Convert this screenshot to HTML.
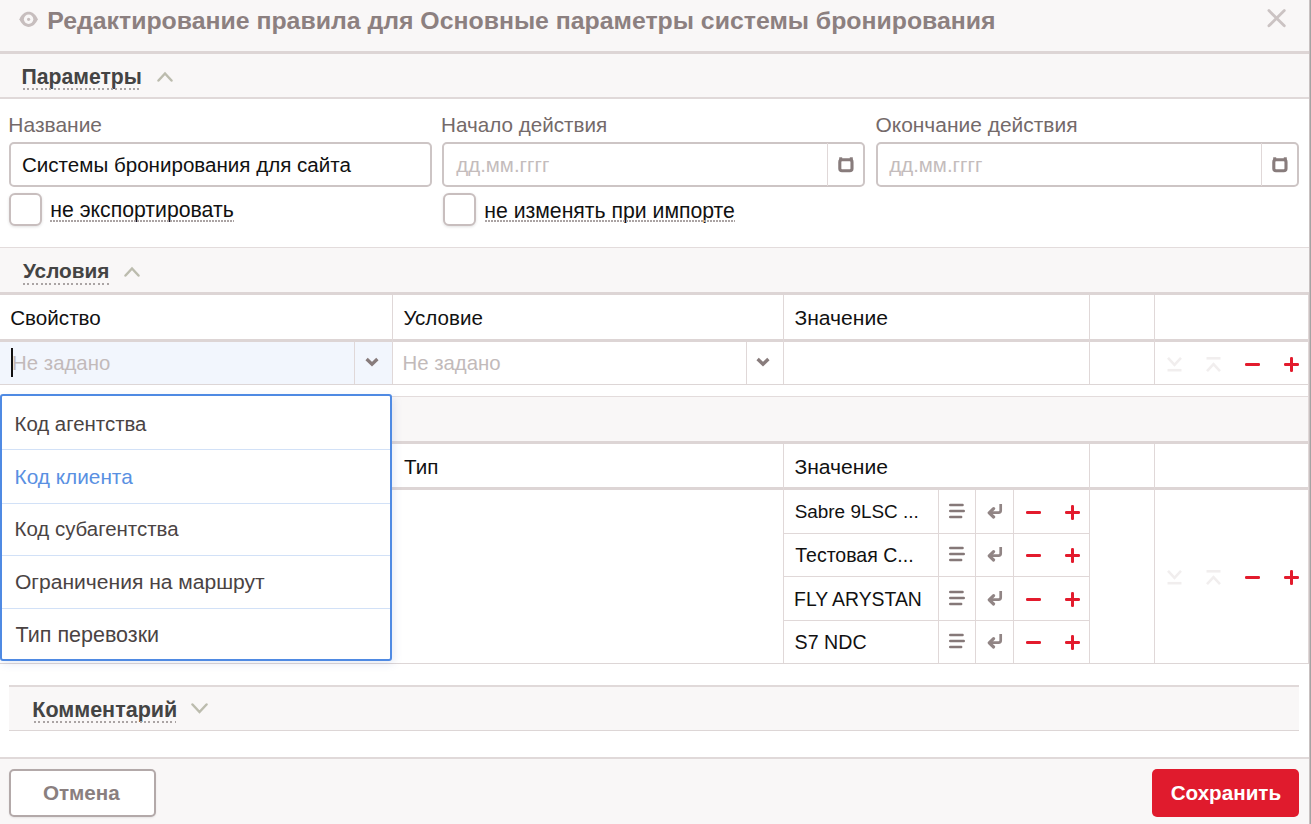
<!DOCTYPE html>
<html><head><meta charset="utf-8">
<style>
html,body{margin:0;padding:0;}
body{width:1311px;height:824px;position:relative;overflow:hidden;background:#fff;font-family:"Liberation Sans",sans-serif;}
.a{position:absolute;box-sizing:border-box;}
.t{position:absolute;white-space:nowrap;line-height:1;}
svg{position:absolute;}
</style></head><body>
<div class="a" style="left:0px;top:0px;width:1311px;height:51px;background:#f9f7f7;"></div>
<div class="a" style="left:0px;top:51px;width:1311px;height:3px;background:#ddd5d5;"></div>
<svg style="left:19px;top:11px" width="20" height="17" viewBox="0 0 20 17"><path d="M0.4 8.3 C4.4 -1.8, 14.8 -1.8, 18.8 8.3 C14.8 18.4, 4.4 18.4, 0.4 8.3 Z" fill="#c7bebe"/><circle cx="9.6" cy="8.3" r="4.7" fill="#f9f7f7"/><circle cx="9.6" cy="8.3" r="1.6" fill="#c7bebe"/></svg>
<div class="t" style="left:47.26px;top:8.68px;font-size:24.83px;color:#8c8080;font-weight:bold;">Редактирование правила для Основные параметры системы бронирования</div>
<svg style="left:1267px;top:9px" width="20" height="20" viewBox="0 0 20 20"><path d="M1.9 1.6 L17.3 16.8 M17.3 1.6 L1.9 16.8" stroke="#cbc3c3" stroke-width="2.8" stroke-linecap="round"/></svg>
<div class="a" style="left:0px;top:54px;width:1309px;height:43px;background:#f9f7f7;"></div>
<div class="a" style="left:0px;top:97px;width:1309px;height:2px;background:#e0d9d9;"></div>
<div class="t" style="left:21.52px;top:66.05px;font-size:21.21px;color:#444;font-weight:bold;">Параметры</div>
<div class="a" style="left:23px;top:88px;width:119px;height:2px;background:repeating-linear-gradient(90deg,#aaa4a4 0 2px,transparent 2px 4.4px);"></div>
<svg style="left:157px;top:71px" width="16" height="11" viewBox="0 0 16 11"><path d="M1.5 9.5 L8 2.5 L14.5 9.5" fill="none" stroke="#bcbcae" stroke-width="2.5" stroke-linecap="round"/></svg>
<div class="t" style="left:8.32px;top:114.50px;font-size:20.97px;color:#746a6a;">Название</div>
<div class="t" style="left:441.10px;top:114.79px;font-size:20.63px;color:#746a6a;">Начало действия</div>
<div class="t" style="left:875.45px;top:114.51px;font-size:20.96px;color:#746a6a;">Окончание действия</div>
<div class="a" style="left:9px;top:142px;width:423px;height:45px;border:2px solid #cdc5c5;border-radius:5px;"></div>
<div class="t" style="left:21.97px;top:154.58px;font-size:20.58px;color:#111;">Системы бронирования для сайта</div>
<div class="a" style="left:442px;top:142px;width:423px;height:45px;border:2px solid #cdc5c5;border-radius:5px;"></div>
<div class="a" style="left:827px;top:143px;width:1px;height:43px;background:#e0d8d8;"></div>
<div class="t" style="left:456.35px;top:154.72px;font-size:20.41px;color:#c4bcbc;">дд.мм.гггг</div>
<svg style="left:838px;top:157px" width="16" height="16" viewBox="0 0 16 16"><rect x="1.8" y="2.8" width="12.2" height="11.0" rx="2.2" fill="none" stroke="#887c7c" stroke-width="3.1"/><rect x="1.2" y="0.3" width="3" height="3" fill="#887c7c"/><rect x="11.8" y="0.3" width="3" height="3" fill="#887c7c"/></svg>
<div class="a" style="left:876px;top:142px;width:423px;height:45px;border:2px solid #cdc5c5;border-radius:5px;"></div>
<div class="a" style="left:1261px;top:143px;width:1px;height:43px;background:#e0d8d8;"></div>
<div class="t" style="left:889.35px;top:154.72px;font-size:20.41px;color:#c4bcbc;">дд.мм.гггг</div>
<svg style="left:1272px;top:157px" width="16" height="16" viewBox="0 0 16 16"><rect x="1.8" y="2.8" width="12.2" height="11.0" rx="2.2" fill="none" stroke="#887c7c" stroke-width="3.1"/><rect x="1.2" y="0.3" width="3" height="3" fill="#887c7c"/><rect x="11.8" y="0.3" width="3" height="3" fill="#887c7c"/></svg>
<div class="a" style="left:9px;top:193px;width:33px;height:33px;border:2px solid #c8bebe;border-radius:6px;box-shadow:0 1px 3px rgba(0,0,0,0.12);background:#fff;"></div>
<div class="t" style="left:50.31px;top:199.82px;font-size:21.24px;color:#111;">не экспортировать</div>
<div class="a" style="left:50px;top:220px;width:184px;height:2px;background:repeating-linear-gradient(90deg,#aaa3a3 0 1.8px,transparent 1.8px 3px);"></div>
<div class="a" style="left:443px;top:193px;width:33px;height:33px;border:2px solid #c8bebe;border-radius:6px;box-shadow:0 1px 3px rgba(0,0,0,0.12);background:#fff;"></div>
<div class="t" style="left:484.26px;top:199.84px;font-size:21.22px;color:#111;">не изменять при импорте</div>
<div class="a" style="left:485px;top:220px;width:250px;height:2px;background:repeating-linear-gradient(90deg,#aaa3a3 0 1.8px,transparent 1.8px 3px);"></div>
<div class="a" style="left:0px;top:247px;width:1309px;height:1px;background:#e3dcdc;"></div>
<div class="a" style="left:0px;top:248px;width:1309px;height:44px;background:#f9f7f7;"></div>
<div class="a" style="left:0px;top:292px;width:1309px;height:3px;background:#ddd5d5;"></div>
<div class="t" style="left:23.00px;top:261.16px;font-size:20.78px;color:#444;font-weight:bold;">Условия</div>
<div class="a" style="left:23px;top:283px;width:86px;height:2px;background:repeating-linear-gradient(90deg,#aaa4a4 0 2px,transparent 2px 4.4px);"></div>
<svg style="left:124px;top:266px" width="16" height="11" viewBox="0 0 16 11"><path d="M1.5 9.5 L8 2.5 L14.5 9.5" fill="none" stroke="#bcbcae" stroke-width="2.5" stroke-linecap="round"/></svg>
<div class="t" style="left:10.22px;top:307.53px;font-size:20.64px;color:#111;">Свойство</div>
<div class="t" style="left:403.38px;top:307.58px;font-size:20.58px;color:#111;">Условие</div>
<div class="t" style="left:794.41px;top:307.15px;font-size:21.09px;color:#111;">Значение</div>
<div class="a" style="left:0px;top:339px;width:1309px;height:3px;background:#ddd5d5;"></div>
<div class="a" style="left:0px;top:342px;width:392px;height:42px;background:#f2f6fd;"></div>
<div class="a" style="left:0px;top:384px;width:1309px;height:1px;background:#ddd6d6;"></div>
<div class="a" style="left:392px;top:295px;width:1px;height:89px;background:#e0d8d8;"></div>
<div class="a" style="left:783px;top:295px;width:1px;height:89px;background:#e0d8d8;"></div>
<div class="a" style="left:1089px;top:295px;width:1px;height:89px;background:#e0d8d8;"></div>
<div class="a" style="left:1154px;top:295px;width:1px;height:89px;background:#e0d8d8;"></div>
<div class="a" style="left:354px;top:342px;width:1px;height:42px;background:#e0d8d8;"></div>
<div class="a" style="left:746px;top:342px;width:1px;height:42px;background:#e0d8d8;"></div>
<div class="a" style="left:11px;top:348px;width:2px;height:29px;background:#111;"></div>
<div class="t" style="left:12.12px;top:352.76px;font-size:20.37px;color:#c2baba;">Не задано</div>
<div class="t" style="left:402.50px;top:352.76px;font-size:20.37px;color:#c2baba;">Не задано</div>
<svg style="left:365px;top:357px" width="14" height="10" viewBox="0 0 14 10"><path d="M1.6 2 L7 7.2 L12.4 2" fill="none" stroke="#887c7c" stroke-width="3.3"/></svg>
<svg style="left:756px;top:357px" width="14" height="10" viewBox="0 0 14 10"><path d="M1.6 2 L7 7.2 L12.4 2" fill="none" stroke="#887c7c" stroke-width="3.3"/></svg>
<svg style="left:1166px;top:356px" width="17" height="17" viewBox="0 0 17 17"><path d="M2 1.8 L8.5 8.8 L15 1.8" fill="none" stroke="#f1eeee" stroke-width="2.6"/><path d="M1.5 14.2 H15.5" stroke="#f1eeee" stroke-width="2.6"/></svg>
<svg style="left:1205px;top:356px" width="17" height="17" viewBox="0 0 17 17"><path d="M2 15.2 L8.5 8.2 L15 15.2" fill="none" stroke="#f1eeee" stroke-width="2.6"/><path d="M1.5 2.3 H15.5" stroke="#f1eeee" stroke-width="2.6"/></svg>
<div class="a" style="left:1245px;top:363px;width:15px;height:3px;background:#e31b2d;border-radius:1.3px;"></div>
<div class="a" style="left:1284px;top:363px;width:15px;height:3px;background:#e31b2d;border-radius:1.3px;"></div>
<div class="a" style="left:1290px;top:357px;width:3px;height:15px;background:#e31b2d;border-radius:1.3px;"></div>
<div class="a" style="left:0px;top:396px;width:1309px;height:1px;background:#e3dcdc;"></div>
<div class="a" style="left:0px;top:397px;width:1309px;height:44px;background:#f9f7f7;"></div>
<div class="a" style="left:0px;top:441px;width:1309px;height:3px;background:#ddd5d5;"></div>
<div class="t" style="left:404.09px;top:456.59px;font-size:20.57px;color:#111;">Тип</div>
<div class="t" style="left:794.41px;top:456.15px;font-size:21.09px;color:#111;">Значение</div>
<div class="a" style="left:0px;top:487px;width:1309px;height:3px;background:#ddd5d5;"></div>
<div class="a" style="left:0px;top:663px;width:1309px;height:1px;background:#ddd6d6;"></div>
<div class="a" style="left:783px;top:444px;width:1px;height:219px;background:#e0d8d8;"></div>
<div class="a" style="left:1089px;top:444px;width:1px;height:219px;background:#e0d8d8;"></div>
<div class="a" style="left:1154px;top:444px;width:1px;height:219px;background:#e0d8d8;"></div>
<div class="a" style="left:938px;top:490px;width:1px;height:173px;background:#e0d8d8;"></div>
<div class="a" style="left:975px;top:490px;width:1px;height:173px;background:#e0d8d8;"></div>
<div class="a" style="left:1013px;top:490px;width:1px;height:173px;background:#e0d8d8;"></div>
<div class="a" style="left:783px;top:533px;width:306px;height:1px;background:#e0d8d8;"></div>
<div class="a" style="left:783px;top:576px;width:306px;height:1px;background:#e0d8d8;"></div>
<div class="a" style="left:783px;top:620px;width:306px;height:1px;background:#e0d8d8;"></div>
<div class="t" style="left:794.65px;top:503.28px;font-size:18.93px;color:#111;">Sabre 9LSC ...</div>
<svg style="left:949px;top:503px" width="16" height="17" viewBox="0 0 16 17"><path d="M1.2 2 H13.6 M1.2 8 H14.8 M1.2 14 H12.2" stroke="#857878" stroke-width="2.4" stroke-linecap="round"/></svg>
<svg style="left:986px;top:503px" width="17" height="17" viewBox="0 0 17 17"><path d="M14.7 1 V7.6 Q14.7 9.7 12.6 9.7 H4" fill="none" stroke="#918585" stroke-width="2.7"/><path d="M7.6 5.6 L3.2 9.8 L7.6 14" fill="none" stroke="#918585" stroke-width="3.2" stroke-linejoin="round" stroke-linecap="round"/></svg>
<div class="a" style="left:1026px;top:511px;width:15px;height:3px;background:#e31b2d;border-radius:1.3px;"></div>
<div class="a" style="left:1065px;top:511px;width:15px;height:3px;background:#e31b2d;border-radius:1.3px;"></div>
<div class="a" style="left:1071px;top:505px;width:3px;height:15px;background:#e31b2d;border-radius:1.3px;"></div>
<div class="t" style="left:795.21px;top:545.87px;font-size:19.53px;color:#111;">Тестовая С...</div>
<svg style="left:949px;top:546px" width="16" height="17" viewBox="0 0 16 17"><path d="M1.2 2 H13.6 M1.2 8 H14.8 M1.2 14 H12.2" stroke="#857878" stroke-width="2.4" stroke-linecap="round"/></svg>
<svg style="left:986px;top:546px" width="17" height="17" viewBox="0 0 17 17"><path d="M14.7 1 V7.6 Q14.7 9.7 12.6 9.7 H4" fill="none" stroke="#918585" stroke-width="2.7"/><path d="M7.6 5.6 L3.2 9.8 L7.6 14" fill="none" stroke="#918585" stroke-width="3.2" stroke-linejoin="round" stroke-linecap="round"/></svg>
<div class="a" style="left:1026px;top:554px;width:15px;height:3px;background:#e31b2d;border-radius:1.3px;"></div>
<div class="a" style="left:1065px;top:554px;width:15px;height:3px;background:#e31b2d;border-radius:1.3px;"></div>
<div class="a" style="left:1071px;top:548px;width:3px;height:15px;background:#e31b2d;border-radius:1.3px;"></div>
<div class="t" style="left:794.05px;top:589.89px;font-size:19.39px;color:#111;">FLY ARYSTAN</div>
<svg style="left:949px;top:590px" width="16" height="17" viewBox="0 0 16 17"><path d="M1.2 2 H13.6 M1.2 8 H14.8 M1.2 14 H12.2" stroke="#857878" stroke-width="2.4" stroke-linecap="round"/></svg>
<svg style="left:986px;top:590px" width="17" height="17" viewBox="0 0 17 17"><path d="M14.7 1 V7.6 Q14.7 9.7 12.6 9.7 H4" fill="none" stroke="#918585" stroke-width="2.7"/><path d="M7.6 5.6 L3.2 9.8 L7.6 14" fill="none" stroke="#918585" stroke-width="3.2" stroke-linejoin="round" stroke-linecap="round"/></svg>
<div class="a" style="left:1026px;top:598px;width:15px;height:3px;background:#e31b2d;border-radius:1.3px;"></div>
<div class="a" style="left:1065px;top:598px;width:15px;height:3px;background:#e31b2d;border-radius:1.3px;"></div>
<div class="a" style="left:1071px;top:592px;width:3px;height:15px;background:#e31b2d;border-radius:1.3px;"></div>
<div class="t" style="left:794.62px;top:632.77px;font-size:19.64px;color:#111;">S7 NDC</div>
<svg style="left:949px;top:633px" width="16" height="17" viewBox="0 0 16 17"><path d="M1.2 2 H13.6 M1.2 8 H14.8 M1.2 14 H12.2" stroke="#857878" stroke-width="2.4" stroke-linecap="round"/></svg>
<svg style="left:986px;top:633px" width="17" height="17" viewBox="0 0 17 17"><path d="M14.7 1 V7.6 Q14.7 9.7 12.6 9.7 H4" fill="none" stroke="#918585" stroke-width="2.7"/><path d="M7.6 5.6 L3.2 9.8 L7.6 14" fill="none" stroke="#918585" stroke-width="3.2" stroke-linejoin="round" stroke-linecap="round"/></svg>
<div class="a" style="left:1026px;top:641px;width:15px;height:3px;background:#e31b2d;border-radius:1.3px;"></div>
<div class="a" style="left:1065px;top:641px;width:15px;height:3px;background:#e31b2d;border-radius:1.3px;"></div>
<div class="a" style="left:1071px;top:635px;width:3px;height:15px;background:#e31b2d;border-radius:1.3px;"></div>
<svg style="left:1166px;top:569px" width="17" height="17" viewBox="0 0 17 17"><path d="M2 1.8 L8.5 8.8 L15 1.8" fill="none" stroke="#f1eeee" stroke-width="2.6"/><path d="M1.5 14.2 H15.5" stroke="#f1eeee" stroke-width="2.6"/></svg>
<svg style="left:1205px;top:569px" width="17" height="17" viewBox="0 0 17 17"><path d="M2 15.2 L8.5 8.2 L15 15.2" fill="none" stroke="#f1eeee" stroke-width="2.6"/><path d="M1.5 2.3 H15.5" stroke="#f1eeee" stroke-width="2.6"/></svg>
<div class="a" style="left:1245px;top:576px;width:15px;height:3px;background:#e31b2d;border-radius:1.3px;"></div>
<div class="a" style="left:1284px;top:576px;width:15px;height:3px;background:#e31b2d;border-radius:1.3px;"></div>
<div class="a" style="left:1290px;top:570px;width:3px;height:15px;background:#e31b2d;border-radius:1.3px;"></div>
<div class="a" style="left:0;top:394px;width:392px;height:267px;border:2px solid #4f8ae3;border-radius:3px;background:#fff;box-shadow:2px 3px 8px rgba(70,100,170,0.13);"></div>
<div class="a" style="left:2px;top:449px;width:388px;height:1px;background:#d2e1f7;"></div>
<div class="a" style="left:2px;top:503px;width:388px;height:1px;background:#d2e1f7;"></div>
<div class="a" style="left:2px;top:555px;width:388px;height:1px;background:#d2e1f7;"></div>
<div class="a" style="left:2px;top:608px;width:388px;height:1px;background:#d2e1f7;"></div>
<div class="t" style="left:14.50px;top:413.71px;font-size:20.42px;color:#4a4343;">Код агентства</div>
<div class="t" style="left:14.60px;top:466.99px;font-size:20.80px;color:#5990e2;">Код клиента</div>
<div class="t" style="left:14.50px;top:519.20px;font-size:20.44px;color:#4a4343;">Код субагентства</div>
<div class="t" style="left:15.00px;top:571.17px;font-size:21.06px;color:#4a4343;">Ограничения на маршрут</div>
<div class="t" style="left:15.60px;top:625.00px;font-size:21.50px;color:#4a4343;">Тип перевозки</div>
<div class="a" style="left:9px;top:685px;width:1290px;height:2px;background:#e0d9d9;"></div>
<div class="a" style="left:9px;top:687px;width:1290px;height:43px;background:#f9f7f7;"></div>
<div class="a" style="left:9px;top:730px;width:1290px;height:1px;background:#ddd6d6;"></div>
<div class="t" style="left:32.24px;top:699.06px;font-size:21.55px;color:#444;font-weight:bold;">Комментарий</div>
<div class="a" style="left:34px;top:721px;width:142px;height:2px;background:repeating-linear-gradient(90deg,#aaa4a4 0 2px,transparent 2px 4.4px);"></div>
<svg style="left:191px;top:703px" width="17" height="11" viewBox="0 0 17 11"><path d="M1.5 1.5 L8.5 9 L15.5 1.5" fill="none" stroke="#bcbcae" stroke-width="2.5" stroke-linecap="round"/></svg>
<div class="a" style="left:0px;top:757px;width:1311px;height:2px;background:#e0d9d9;"></div>
<div class="a" style="left:0px;top:759px;width:1311px;height:65px;background:#f9f7f7;"></div>
<div class="a" style="left:9px;top:769px;width:147px;height:48px;border:2px solid #b3a9a9;border-radius:5px;background:#fff;box-shadow:0 1px 2px rgba(0,0,0,0.08);"></div>
<div class="t" style="left:42.92px;top:783.01px;font-size:20.66px;color:#8a7f7f;font-weight:bold;">Отмена</div>
<div class="a" style="left:1152px;top:769px;width:147px;height:48px;background:#e01b2d;border-radius:5px;"></div>
<div class="t" style="left:1170.67px;top:783.03px;font-size:20.64px;color:#fff;font-weight:bold;">Сохранить</div>
<div class="a" style="left:1308px;top:295px;width:1px;height:368px;background:#e0d8d8;"></div>
<div class="a" style="left:1309px;top:0px;width:1px;height:824px;background:#c8c1c1;"></div>
<div class="a" style="left:1310px;top:0px;width:1px;height:824px;background:#a3a3a3;"></div>
</body></html>
